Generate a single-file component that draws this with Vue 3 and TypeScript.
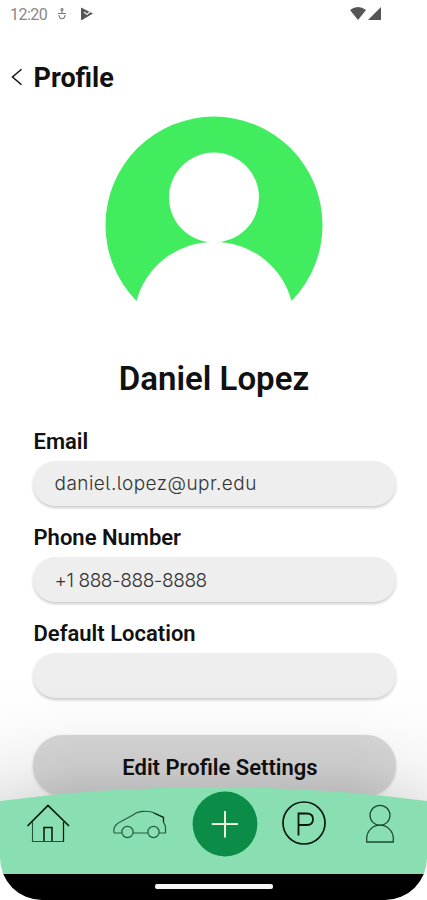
<script setup lang="ts">
interface Field {
  label: string
  value: string
  kind: string
}

const fields: Field[] = [
  { label: 'Email', value: 'daniel.lopez@upr.edu', kind: 'email' },
  { label: 'Phone Number', value: '+1 888-888-8888', kind: 'phone' },
  { label: 'Default Location', value: '', kind: 'location' },
]
</script>

<template>
  <div class="screen">
    <div class="status">
      <span class="time">12:20</span>
      <svg class="dot-icon" width="10" height="14" viewBox="0 0 10 14" fill="none" stroke="#777" stroke-width="1.1">
        <circle cx="5" cy="2.5" r="1" />
        <path d="M1 6.5H9M5 3.5V6M2 8Q2 11.5 5 11.7Q8 11.5 8 8" />
      </svg>
      <svg class="play-icon" width="14" height="14" viewBox="0 0 14 14">
        <path d="M1 0.5L13 6.5L2 13H1Z" fill="#555" />
        <path d="M4 5L7 7.5L12 3" stroke="#eee" stroke-width="1.3" fill="none" />
      </svg>
      <svg class="signal" width="32" height="16" viewBox="0 0 32 16" fill="#555">
        <path d="M0 4Q8 -2 16 4L8 14Z" />
        <path d="M31 1V14H18Z" />
      </svg>
    </div>

    <header class="header">
      <svg width="12" height="18" viewBox="0 0 12 18" fill="none" stroke="#111" stroke-width="1.5">
        <path d="M10.5 1.2L1.5 9L10.5 16.8" />
      </svg>
      <h1 class="title">Profile</h1>
    </header>

    <svg class="avatar" width="218" height="186" viewBox="0 0 218 186">
      <path
        d="M31.5 185A108.5 108.5 0 1 1 186.5 185A79 79 0 0 0 109 126A79 79 0 0 0 31.5 185Z"
        fill="#41ec5f"
      />
      <circle cx="109" cy="81.5" r="45" fill="#fff" />
    </svg>

    <h2 class="name">Daniel Lopez</h2>

    <div class="fields">
      <div v-for="f in fields" :key="f.label" class="field">
        <span class="label">{{ f.label }}</span>
        <div class="pill"><span :class="['value', f.kind]">{{ f.value }}</span></div>
      </div>
    </div>

    <button class="edit">Edit Profile Settings</button>

    <div class="shade"></div>

    <div class="bottom">
      <nav class="nav">
        <svg class="nav-bg" width="427" height="87" viewBox="0 0 427 87">
          <path d="M0 14Q213.5 -14 427 14V87H0Z" fill="#89dfb1" />
        </svg>
        <div class="items">
          <svg class="home" width="44" height="40" viewBox="0 0 44 40" fill="none" stroke="#06170e">
            <path d="M1.5 22L22 1.5L43 22" stroke-width="1.7" />
            <path d="M6.5 18V37.5H37.5V18" stroke-width="1.1" stroke="#23553c" />
            <path d="M37.5 18V37.5" stroke-width="1.2" />
            <path d="M18 37V23.5H26V37" stroke-width="1.5" />
          </svg>
          <svg class="car" width="54" height="30" viewBox="0 0 54 30" fill="none" stroke="#245b3f" stroke-width="1.2">
            <path d="M8.9 24H1.5Q.5 24 1 20Q1.5 15.5 8 12.5L20 6Q24 2.5 31 2.3Q38 2 41 4L50.5 8.5V13L52.5 17.5V24H46.1M20.1 24H34.9" />
            <path d="M41 4L50.5 8.5V13" stroke="#102b1d" />
            <circle cx="14.5" cy="23" r="5.6" />
            <circle cx="40.5" cy="23" r="5.6" />
          </svg>
          <svg class="add" width="66" height="66" viewBox="0 0 66 66">
            <circle cx="33" cy="33" r="32.4" fill="#0b8d47" />
            <path d="M19.8 33H46M33 20V46.5" stroke="#eef8d8" stroke-width="2" />
          </svg>
          <svg class="parking" width="44" height="44" viewBox="0 0 44 44" fill="none" stroke="#06170e">
            <circle cx="22" cy="22" r="21" stroke-width="1.7" />
            <path d="M16.5 34.5V12.5H25Q31 12.5 31 18.2T25 24H16.5" stroke-width="1.8" />
          </svg>
          <svg class="person" width="30" height="40" viewBox="0 0 30 40" fill="none" stroke="#1d4b34" stroke-width="1.3">
            <circle cx="15" cy="11.3" r="10" />
            <path d="M1.7 38V34.5A13.3 13.3 0 0 1 28.3 34.5V38Z" />
          </svg>
        </div>
      </nav>
      <div class="home-bar"><span class="handle"></span></div>
    </div>
  </div>
</template>

<style>
body {
  margin: 0;
  background: #fff;
}
</style>

<style scoped>
.screen {
  position: relative;
  box-sizing: border-box;
  width: 427px;
  height: 900px;
  overflow: hidden;
  display: flex;
  flex-direction: column;
  background: #fff;
  border-radius: 0 0 42px 42px;
  font-family: Roboto, sans-serif;
  color: #111;
}
.status {
  display: flex;
  align-items: center;
  height: 28px;
  padding-left: 10px;
}
.time {
  width: 38px;
  font-size: 16px;
  font-weight: 400;
  letter-spacing: -0.5px;
  color: #888;
}
.dot-icon {
  margin-left: 9px;
}
.play-icon {
  margin-left: 13px;
}
.signal {
  margin-left: 256px;
}
.header {
  display: flex;
  align-items: center;
  gap: 10.5px;
  height: 40px;
  margin-top: 29px;
  padding: 0 0 0 11px;
  flex: none;
  align-self: flex-start;
}
.title {
  margin: 1px 0 0;
  font-size: 27px;
  font-weight: 700;
  line-height: 40px;
}
.avatar {
  display: block;
  flex: none;
  margin: 19px auto 0;
}
.name {
  margin: 57px 0 0;
  padding-left: 1px;
  height: 40px;
  line-height: 40px;
  font-size: 33px;
  font-weight: 600;
  text-align: center;
}
.fields {
  display: flex;
  flex-direction: column;
  margin: 28px 31px 0 33px;
}
.field {
  height: 96px;
}
.label {
  display: block;
  height: 30px;
  line-height: 30px;
  padding-left: 0.5px;
  margin-bottom: 4px;
  font-size: 22px;
  font-weight: 600;
}
.pill {
  box-sizing: border-box;
  display: flex;
  align-items: center;
  height: 45px;
  padding-left: 21.5px;
  border-radius: 23px;
  background: #eee;
  box-shadow: 0 2px 3px rgba(0, 0, 0, 0.2);
}
.value {
  font-family: Inter, sans-serif;
  font-size: 19px;
  font-weight: 300;
  color: #333;
  white-space: nowrap;
}
.email {
  font-feature-settings: 'cv05';
  letter-spacing: 0.45px;
}
.phone {
  padding-top: 2px;
  letter-spacing: -0.42px;
}
.edit {
  flex: none;
  width: 363px;
  height: 61px;
  margin: 20px 0 0 33px;
  padding: 4px 0 0 11px;
  border: 0;
  border-radius: 30px;
  background: #d9d9d9;
  box-shadow: 0 1px 3px rgba(0, 0, 0, 0.15);
  font-family: inherit;
  font-size: 22px;
  font-weight: 600;
  color: #111;
}
.shade {
  position: absolute;
  left: 0;
  top: 680px;
  width: 427px;
  height: 125px;
  background: linear-gradient(rgba(0, 0, 0, 0), rgba(0, 0, 0, 0.02) 35%, rgba(0, 0, 0, 0.075) 70%, rgba(0, 0, 0, 0.17));
  mask-image: linear-gradient(90deg, rgba(0, 0, 0, 0.6), #000 18%, #000 82%, rgba(0, 0, 0, 0.5));
}
.bottom {
  position: absolute;
  left: 0;
  bottom: 0;
  width: 427px;
}
.nav {
  position: relative;
  height: 87px;
}
.nav-bg {
  position: absolute;
  inset: 0;
}
.items {
  position: relative;
  display: flex;
  align-items: center;
  height: 74px;
  padding-left: 26px;
}
.car {
  margin-left: 43px;
}
.add {
  margin-left: 25px;
}
.parking {
  margin: -2px 0 0 24px;
}
.person {
  margin: -1px 0 0 39px;
}
.home-bar {
  display: flex;
  justify-content: center;
  height: 26px;
  background: #000;
}
.handle {
  width: 118px;
  height: 5px;
  margin-top: 10px;
  border-radius: 2px;
  background: #f5f5f5;
}
</style>
